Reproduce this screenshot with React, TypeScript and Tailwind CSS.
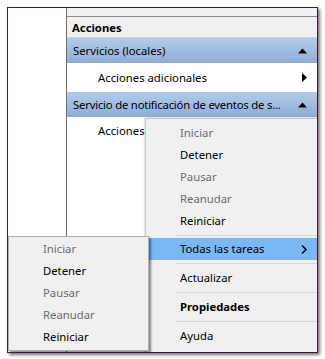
import React from "react";

const font = { fontFamily: '"Noto Sans", "Open Sans", sans-serif' };

function MenuItem({ label, disabled, bold, pad }: { label: string; disabled?: boolean; bold?: boolean; pad: string }) {
  return (
    <div className={`h-[22px] flex items-center ${pad} ${disabled ? "text-[#6d6d6d]" : "text-black"} ${bold ? "font-bold" : ""}`}>
      {label}
    </div>
  );
}

function Sep() {
  return (
    <div className="h-[6px] flex items-center pl-[30px] pr-[1px]">
      <div className="h-px w-full bg-[#d6d6d6]" />
    </div>
  );
}

export default function App() {
  return (
    <div className="w-[325px] h-[359px] bg-white relative text-[11.3px] leading-none" style={font}>
      <div className="absolute left-[7px] top-[7px] w-[311px] h-[346px] border border-[#3c1a3a] shadow-[2px_2px_3px_rgba(0,0,0,0.55)] bg-white overflow-hidden flex">
        <div className="w-[59px] shrink-0 bg-white border-r border-[#6e6e6e]" />
        <div className="flex-1 min-w-0 flex flex-col">
          <div className="h-[9px] bg-[#f0f0f0] border-b border-[#8a8a8a]" />
          <div className="h-[21px] bg-[#f0f0f0] border-b border-[#d0d0d0] flex items-center pl-[5px] pt-[2px] font-bold text-black">Acciones</div>
          <div className="h-[25px] bg-gradient-to-b from-[#b3cbe8] to-[#8dadd6] flex items-center pl-[6px] pr-[10px] text-black">
            <span className="flex-1">Servicios (locales)</span>
            <svg width="9" height="6" viewBox="0 0 9 6"><path d="M0 5.5 L4.5 0.5 L9 5.5 Z" fill="#000" /></svg>
          </div>
          <div className="h-[29px] bg-white flex items-center pl-[31px] pr-[10px] text-black">
            <span className="flex-1">Acciones adicionales</span>
            <svg width="5" height="9" viewBox="0 0 5 9"><path d="M0 0 L5 4.5 L0 9 Z" fill="#000" /></svg>
          </div>
          <div className="h-[25px] bg-gradient-to-b from-[#b3cbe8] to-[#8dadd6] flex items-center pl-[6px] pr-[10px] text-black">
            <span className="flex-1 whitespace-nowrap tracking-[-0.2px]">Servicio de notificación de eventos de s...</span>
            <svg width="9" height="6" viewBox="0 0 9 6" className="ml-[3px] shrink-0"><path d="M0 5.5 L4.5 0.5 L9 5.5 Z" fill="#000" /></svg>
          </div>
          <div className="flex-1 bg-white pl-[31px] pt-[8px] text-black">Acciones</div>
        </div>

        {/* main context menu */}
        <div className="absolute left-[137px] top-[110px] w-[180px] h-[240px] bg-[#f0f0f0] border border-[#c8c8c8] shadow-[0_0_2px_rgba(0,0,0,0.3)] pt-[3px]">
          <MenuItem label="Iniciar" disabled pad="pl-[34px]" />
          <MenuItem label="Detener" pad="pl-[34px]" />
          <MenuItem label="Pausar" disabled pad="pl-[34px]" />
          <MenuItem label="Reanudar" disabled pad="pl-[34px]" />
          <MenuItem label="Reiniciar" pad="pl-[34px]" />
          <Sep />
          <div className="h-[22px] mx-[2px] bg-[#7ab7f3] flex items-center pl-[32px] pr-[15px] text-black">
            <span className="flex-1">Todas las tareas</span>
            <svg width="6" height="9" viewBox="0 0 6 9"><path d="M1 0.5 L5 4.5 L1 8.5" stroke="#000" strokeWidth="1.4" fill="none" /></svg>
          </div>
          <Sep />
          <MenuItem label="Actualizar" pad="pl-[34px] h-[23px]" />
          <Sep />
          <MenuItem label="Propiedades" bold pad="pl-[34px] h-[23px]" />
          <Sep />
          <MenuItem label="Ayuda" pad="pl-[34px] h-[23px]" />
        </div>

        {/* submenu */}
        <div className="absolute left-0 top-[228px] w-[141px] h-[115px] bg-[#f0f0f0] border border-[#b0b0b0] shadow-[2px_2px_2px_rgba(0,0,0,0.45)] pt-[1px]">
          <MenuItem label="Iniciar" disabled pad="pl-[34px]" />
          <MenuItem label="Detener" pad="pl-[34px]" />
          <MenuItem label="Pausar" disabled pad="pl-[34px]" />
          <MenuItem label="Reanudar" disabled pad="pl-[34px]" />
          <MenuItem label="Reiniciar" pad="pl-[34px]" />
        </div>
      </div>
    </div>
  );
}
